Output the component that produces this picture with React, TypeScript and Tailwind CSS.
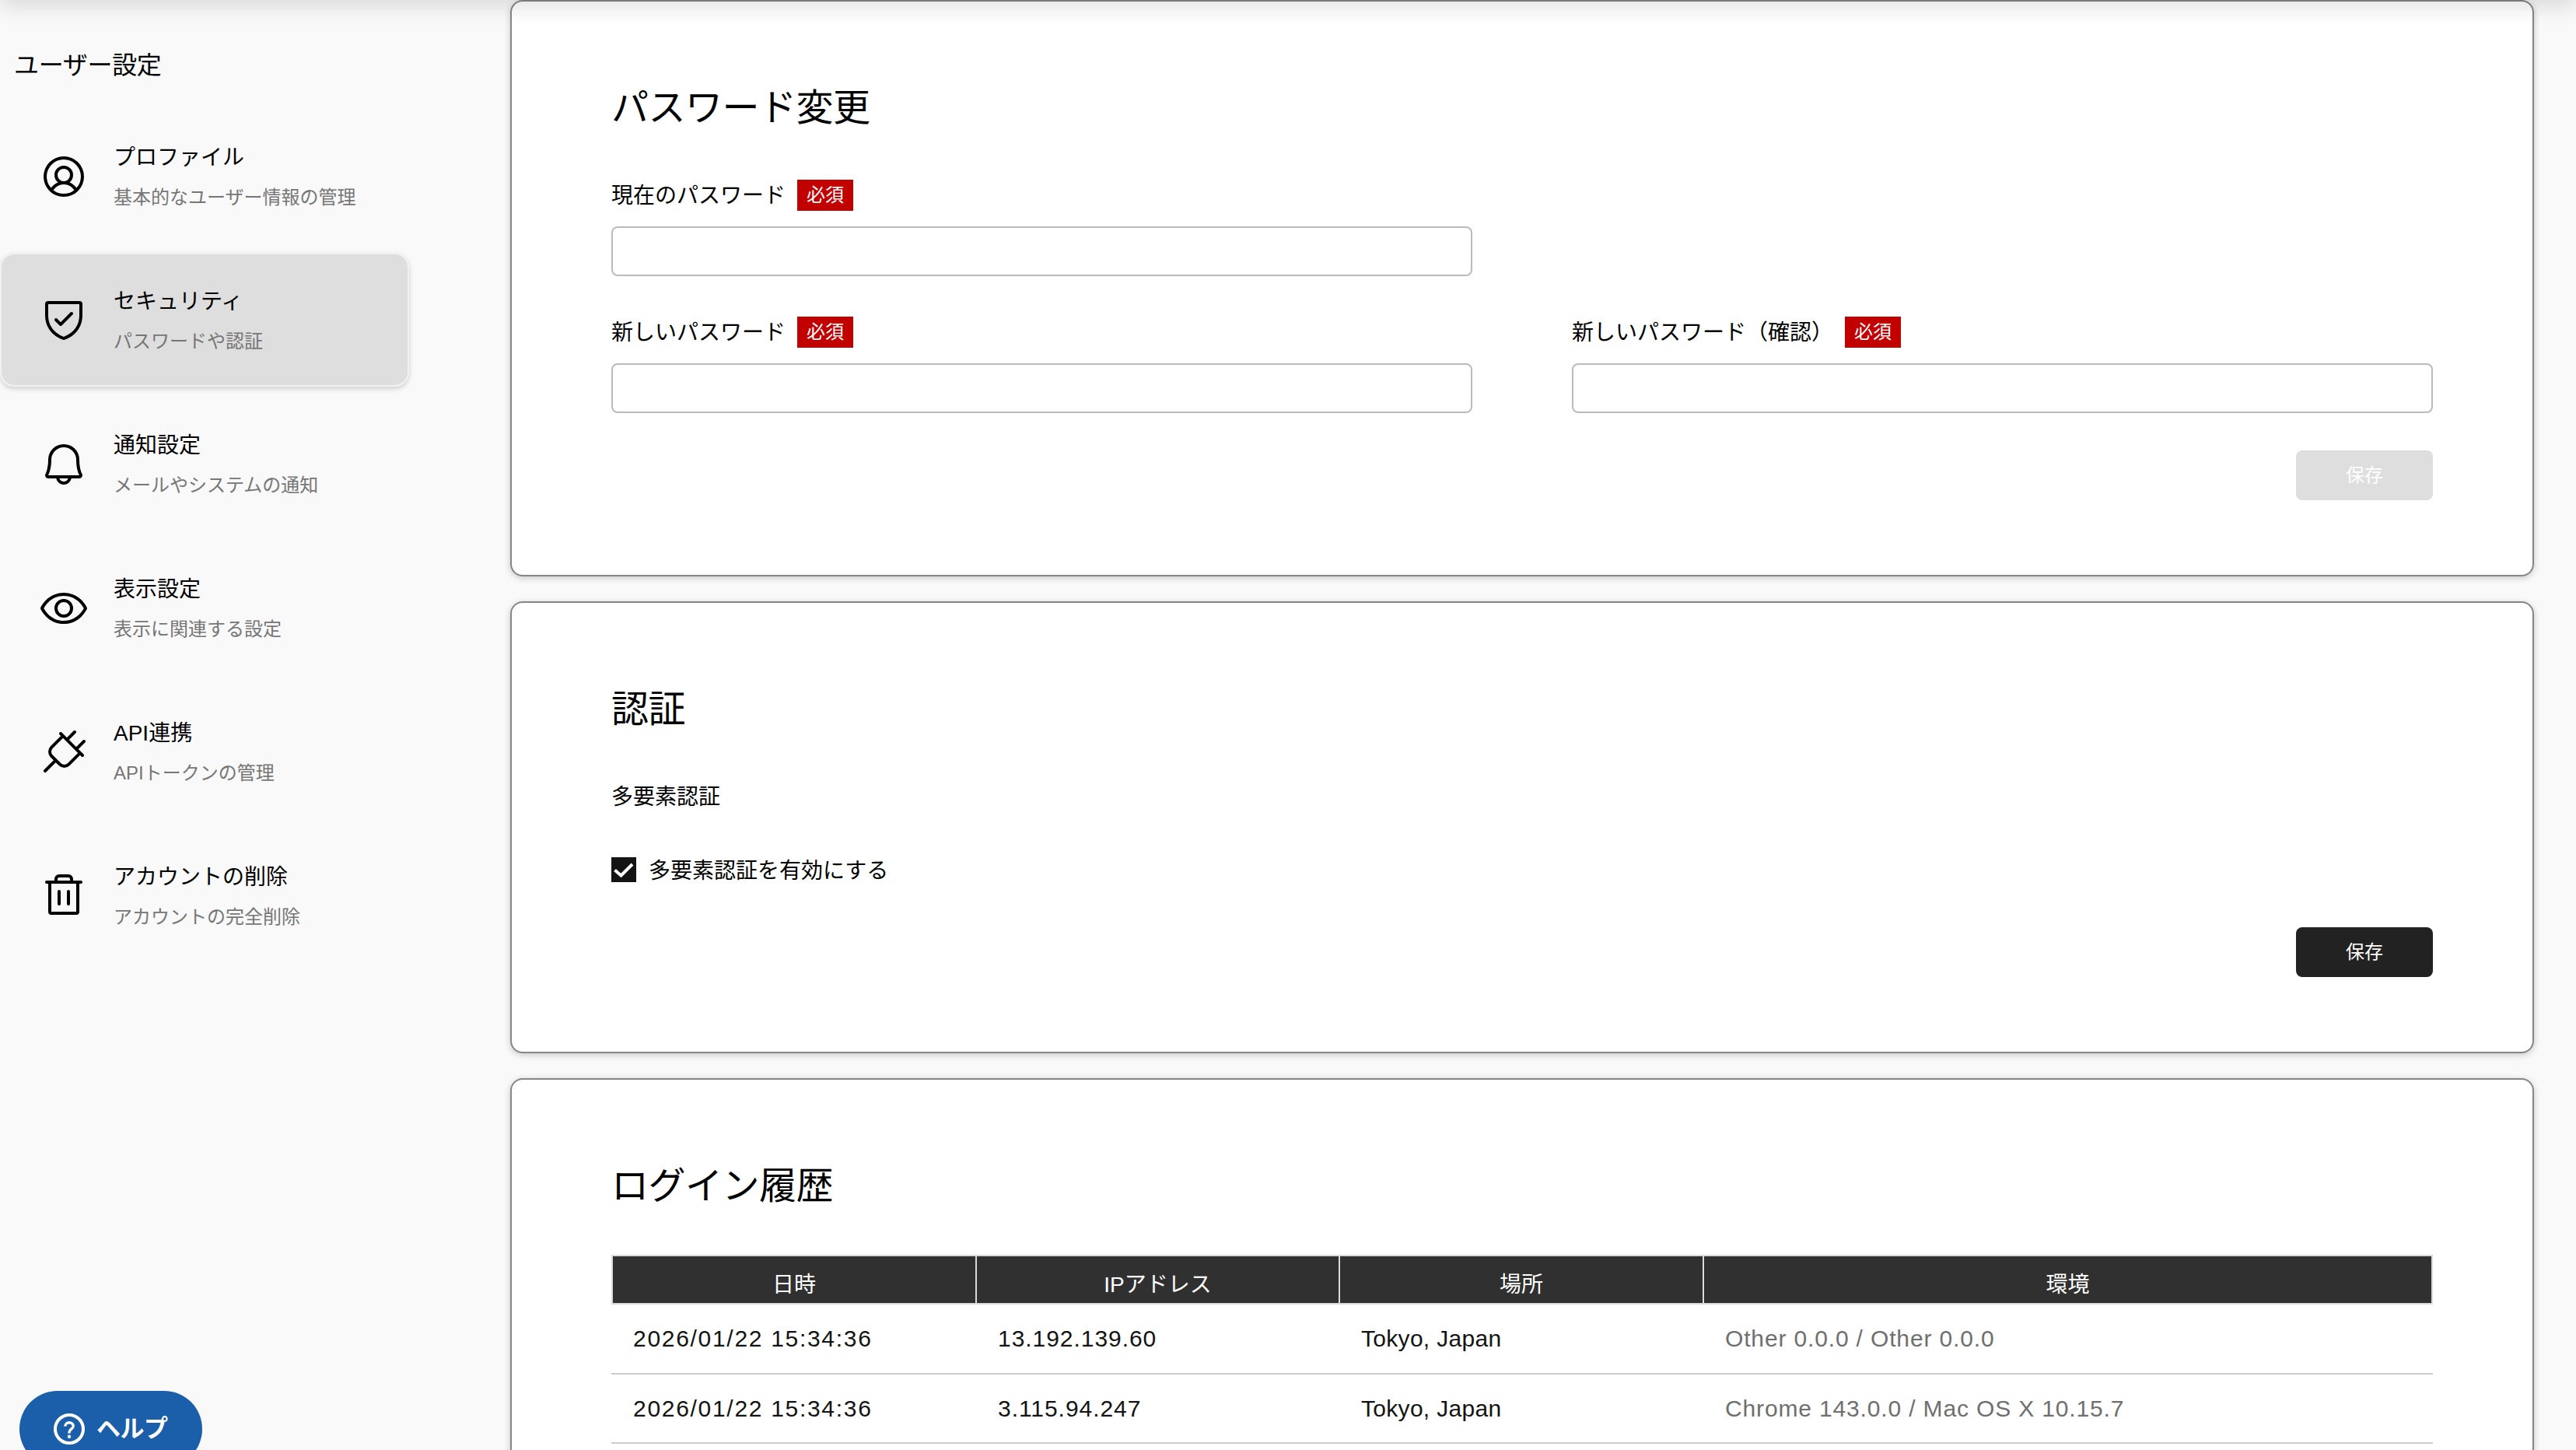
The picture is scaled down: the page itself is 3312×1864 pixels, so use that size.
import type { ReactNode } from "react";
import {
  PiBell,
  PiEye,
  PiPlug,
  PiShieldCheck,
  PiTrash,
  PiUserCircle,
} from "react-icons/pi";

const menu = [
  { name: "プロファイル", note: "基本的なユーザー情報の管理", Icon: PiUserCircle },
  { name: "セキュリティ", note: "パスワードや認証", Icon: PiShieldCheck, active: true },
  { name: "通知設定", note: "メールやシステムの通知", Icon: PiBell },
  { name: "表示設定", note: "表示に関連する設定", Icon: PiEye },
  { name: "API連携", note: "APIトークンの管理", Icon: PiPlug },
  { name: "アカウントの削除", note: "アカウントの完全削除", Icon: PiTrash },
];

const logins = [
  {
    date: "2026/01/22 15:34:36",
    ip: "13.192.139.60",
    place: "Tokyo, Japan",
    env: "Other 0.0.0 / Other 0.0.0",
  },
  {
    date: "2026/01/22 15:34:36",
    ip: "3.115.94.247",
    place: "Tokyo, Japan",
    env: "Chrome 143.0.0 / Mac OS X 10.15.7",
  },
];

const Sidebar = () => {
  return (
    <aside className="w-[656px] shrink-0">
      <h1 className="pt-[60px] pl-[18px] text-[32px] leading-[48px] tracking-[-0.3px]">ユーザー設定</h1>
      <ul className="mt-8 flex w-[526px] flex-col gap-[13px]">
        {menu.map(({ name, note, Icon, active }) => (
          <li
            key={name}
            className={
              active
                ? "flex h-[172px] rounded-[18px] border-2 border-[#f1f1f1] bg-[#dedede] bg-clip-padding pl-12 shadow-[0_3px_6px_rgba(0,0,0,0.16)]"
                : "flex h-[172px] border-2 border-transparent pl-12"
            }
          >
            <Icon className={active ? "mt-[50px] size-16 shrink-0" : "mt-[53px] size-16 shrink-0"} />
            <div className="ml-8 pt-[41px]">
              <p className="text-[28px] leading-10">{name}</p>
              <p className="mt-[13px] text-2xl leading-9 text-[#767676]">{note}</p>
            </div>
          </li>
        ))}
      </ul>
    </aside>
  );
};

const Card = ({ title, className, children }: { title: string; className: string; children: ReactNode }) => {
  return (
    <section
      className={`rounded-[16px] border-2 border-[#868686] bg-white px-32 pt-[101px] shadow-[0_2px_8px_rgba(0,0,0,0.2)] ${className}`}
    >
      <h2 className="pb-px text-5xl leading-[72px] tracking-[-0.5px]">{title}</h2>
      {children}
    </section>
  );
};

const Field = ({ label }: { label: string }) => {
  return (
    <label className="block w-[1107px]">
      <span className="flex h-10 items-center gap-[15px] text-[28px]">
        <span className="pt-0.5 leading-10">{label}</span>
        <span className="bg-[#c20000] px-3 text-2xl leading-10 text-white">必須</span>
      </span>
      <input
        type="password"
        className="mt-5 block h-16 w-full rounded-lg border-2 border-[#bbbbbb] bg-white"
      />
    </label>
  );
};

const SaveButton = ({ className }: { className: string }) => {
  return (
    <button className={`ml-auto block h-16 w-44 rounded-lg text-2xl text-white ${className}`}>
      保存
    </button>
  );
};

const HelpButton = () => {
  return (
    <button className="absolute top-[1788px] left-[25px] flex h-[98px] w-[235px] items-center rounded-[49px] bg-[#1b5eaa] pl-11 text-white">
      <svg viewBox="0 0 40 40" className="size-10" fill="none" stroke="currentColor">
        <circle cx="20" cy="20" r="18" strokeWidth="4" />
        <path
          d="M14.8 16.6c0-2.8 2.2-4.8 5.2-4.8s5.2 1.9 5.2 4.5c0 3.7-5.2 4.1-5.2 7.900v1.200"
          strokeWidth="3.4"
        />
        <circle cx="20" cy="29.8" r="2.2" fill="currentColor" stroke="none" />
      </svg>
      <span className="ml-[15px] text-[31px] font-bold tracking-[-0.5px]">ヘルプ</span>
    </button>
  );
};

const App = () => {
  return (
    <div className="relative flex h-[1864px] w-[3312px] overflow-hidden bg-[#f9f9f9] font-['Liberation_Sans','Noto_Sans_CJK_JP',sans-serif] text-black">
      <Sidebar />
      <main className="flex w-[2602px] flex-col gap-8">
        <Card title="パスワード変更" className="h-[741px] shrink-0">
          <div className="mt-[55px]">
            <Field label="現在のパスワード" />
          </div>
          <div className="mt-[52px] flex justify-between">
            <Field label="新しいパスワード" />
            <Field label="新しいパスワード（確認）" />
          </div>
          <SaveButton className="mt-12 bg-[#dedede]" />
        </Card>

        <Card title="認証" className="h-[581px] shrink-0">
          <p className="mt-[55px] text-[28px] leading-[42px]">多要素認証</p>
          <label className="mt-14 flex h-8 items-center gap-4 text-[28px]">
            <span className="flex size-8 items-center justify-center bg-[#141414]">
              <svg viewBox="0 0 32 32" className="size-8" fill="none" stroke="#fff" strokeWidth="4">
                <path d="M4.5 16.5 12.5 23.5 27 9" />
              </svg>
            </span>
            <span className="pt-[3px]">多要素認証を有効にする</span>
          </label>
          <SaveButton className="mt-[58px] bg-[#222222]" />
        </Card>

        <Card title="ログイン履歴" className="h-[700px] shrink-0">
          <div className="mt-[51px] grid h-16 grid-cols-[466px_467px_468px_1fr] overflow-hidden border-2 border-[#dadada] bg-[#303030] text-center text-[28px] leading-[74px] text-white">
            <div>日時</div>
            <div className="border-l-2 border-[#dadada]">IPアドレス</div>
            <div className="border-l-2 border-[#dadada]">場所</div>
            <div className="border-l-2 border-[#dadada]">環境</div>
          </div>
          {logins.map((login) => (
            <div
              key={login.ip}
              className="grid h-[89.5px] grid-cols-[469px_467px_468px_1fr] border-b-2 border-[#cccccc] pl-7 text-[30px] leading-[88px] text-[#141414]"
            >
              <div className="tracking-[1.7px]">{login.date}</div>
              <div className="tracking-[0.95px]">{login.ip}</div>
              <div className="tracking-[0.3px]">{login.place}</div>
              <div className="tracking-[0.85px] text-[#6f6f6f]">{login.env}</div>
            </div>
          ))}
        </Card>
      </main>
      {/* shadow dropped by the app bar above the scroll area */}
      <div className="pointer-events-none absolute -top-20 left-0 h-20 w-full shadow-[0_8px_28px_rgba(0,0,0,0.13)]" />
      <HelpButton />
    </div>
  );
};

export default App;
